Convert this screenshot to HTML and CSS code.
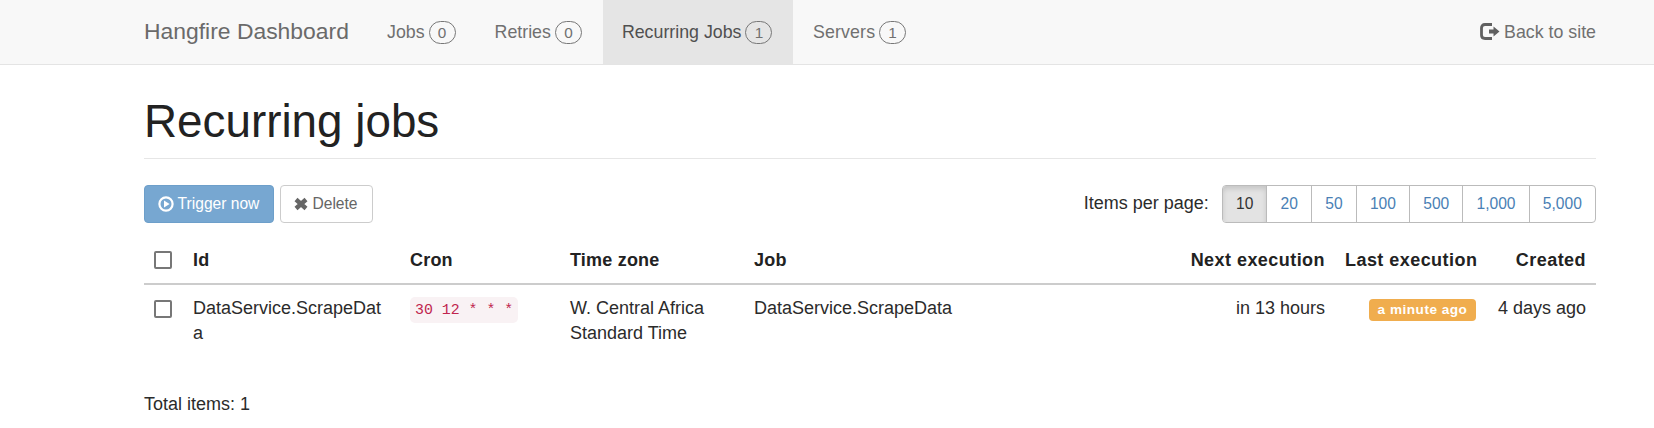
FILE: index.html
```
<!DOCTYPE html>
<html lang="en">
<head>
    <meta charset="UTF-8">
    <meta name="viewport" content="width=device-width, initial-scale=1.0">
    <title>Recurring jobs - Hangfire Dashboard</title>
    <link rel="stylesheet" href="styles.css">
</head>
<body>

    <div class="navbar">
        <div class="container">
            <a class="navbar-brand">Hangfire Dashboard</a>
            <ul class="nav">
                <li>Jobs <span class="metric">0</span></li>
                <li>Retries <span class="metric">0</span></li>
                <li class="active">Recurring Jobs <span class="metric">1</span></li>
                <li>Servers <span class="metric">1</span></li>
            </ul>
            <a class="back">
                <svg class="icon-logout" viewBox="0 0 20 17">
                    <path d="M12 1.5H5Q1.5 1.5 1.5 5V12Q1.5 15.5 5 15.5H12" fill="none" stroke="currentColor" stroke-width="2.8"/>
                    <path d="M9 6.5H13.5V3.5L19.5 8.5L13.5 13.5V10.5H9Z" fill="currentColor"/>
                </svg>
                <span>Back to site</span>
            </a>
        </div>
    </div>

    <div class="container content">
        <h1 class="page-header">Recurring jobs</h1>

        <div class="btn-toolbar">
            <button class="btn btn-primary">
                <svg class="icon" viewBox="0 0 16 16">
                    <circle cx="8" cy="8" r="6.6" fill="none" stroke="currentColor" stroke-width="2.2"/>
                    <path d="M6 4.5L11.6 8L6 11.5Z" fill="currentColor"/>
                </svg>
                <span>Trigger now</span>
            </button>
            <button class="btn btn-default">
                <svg class="icon icon-remove" viewBox="0 0 14 14">
                    <path d="M2 2.5L12 11.5M12 2.5L2 11.5" stroke="currentColor" stroke-width="4.4"/>
                </svg>
                <span>Delete</span>
            </button>
            <span class="per-page-label">Items per page:</span>
            <div class="btn-group">
                <a class="active">10</a>
                <a>20</a>
                <a>50</a>
                <a>100</a>
                <a>500</a>
                <a>1,000</a>
                <a>5,000</a>
            </div>
        </div>

        <table class="table">
            <colgroup>
                <col class="col-check">
                <col class="col-id">
                <col class="col-cron">
                <col class="col-zone">
                <col class="col-job">
                <col class="col-next">
                <col class="col-last">
                <col class="col-created">
            </colgroup>
            <thead>
                <tr>
                    <th><input type="checkbox"></th>
                    <th>Id</th>
                    <th>Cron</th>
                    <th>Time zone</th>
                    <th>Job</th>
                    <th class="right wide">Next execution</th>
                    <th class="right wide">Last execution</th>
                    <th class="right wide">Created</th>
                </tr>
            </thead>
            <tbody>
                <tr>
                    <td><input type="checkbox"></td>
                    <td class="word-break">DataService.ScrapeData</td>
                    <td><code>30 12 * * *</code></td>
                    <td>W. Central Africa Standard Time</td>
                    <td>DataService.ScrapeData</td>
                    <td class="right">in 13 hours</td>
                    <td class="right"><span class="label">a minute ago</span></td>
                    <td class="right">4 days ago</td>
                </tr>
            </tbody>
        </table>

        <div class="total">Total items: 1</div>
    </div>

</body>
</html>
```
FILE: styles.css
```
* { box-sizing: border-box; }
body {
    margin: 0;
    background-color: #fff;
    color: #2b2b2b;
    font-family: "Liberation Sans", Arial, sans-serif;
    font-size: 18px;
    line-height: 25.5px;
    overflow: hidden;
}
.container { width: 1452px; margin-left: 144px; }

/* Top navigation */
.navbar { height: 65px; background-color: #f8f8f8; border-bottom: 1px solid #e4e4e4; color: #707070; font-size: 17.8px; }
.navbar .container { display: flex; height: 64px; }
.navbar-brand { width: 224px; font-size: 22.9px; line-height: 63px; color: #6a6a6a; white-space: nowrap; }
.nav { display: flex; margin: 0; padding: 0; list-style: none; line-height: 27px; }
.nav li { display: flex; align-items: center; gap: 4px; padding: 1px 20px 0 19px; white-space: nowrap; }
.nav li:nth-child(2) { padding-right: 21px; }
.nav li.active { width: 190px; background-color: #e5e5e5; color: #505050; }
.nav li:last-child { padding-left: 20px; letter-spacing: 0.15px; }
.metric {
    width: 27px;
    height: 23px;
    border: 1.5px solid #777;
    border-radius: 12px;
    color: #707070;
    font-size: 15.3px;
    line-height: 21px;
    text-align: center;
}
.back { display: flex; align-items: center; gap: 4px; margin-left: auto; padding-top: 1px; }
.icon-logout { width: 20px; height: 17px; margin-top: -2px; color: #606060; }

/* Page title */
.page-header {
    margin: 0 0 26px;
    padding: 32px 0 11px;
    border-bottom: 1px solid #e6e6e6;
    color: #222;
    font-size: 45.8px;
    font-weight: normal;
    line-height: 50px;
}

/* Buttons above the table */
.btn-toolbar { display: flex; align-items: center; height: 38px; margin-bottom: 14px; }
.btn {
    display: flex;
    align-items: center;
    justify-content: center;
    gap: 4px;
    height: 38px;
    margin: 0 6px 0 0;
    padding: 0 1px 1px 0;
    border: 1px solid #ccc;
    border-radius: 4px;
    background-color: #fff;
    color: #666;
    font-family: inherit;
    font-size: 15.6px;
    white-space: nowrap;
}
.btn-primary { width: 130px; border-color: #6d9fca; background-color: #77a7d1; color: #fff; }
.btn-default { width: 93px; }
.icon { width: 16px; height: 16px; }
.icon-remove { width: 14px; height: 14px; }
.per-page-label { margin-left: auto; margin-right: 13px; }
.btn-group { display: flex; height: 38px; border: 1px solid #bbb; border-radius: 4px; color: #4a7fb5; font-size: 15.6px; line-height: 36px; }
.btn-group a { padding: 0 13.15px; border-left: 1px solid #bbb; }
.btn-group a:first-child { border-left: none; }
.btn-group .active {
    border-radius: 3px 0 0 3px;
    background-color: #e3e3e3;
    box-shadow: inset 0 3px 5px rgba(0, 0, 0, 0.13);
    color: #333;
}

/* Recurring jobs table */
.table { width: 1452px; margin-bottom: 35px; border-collapse: separate; border-spacing: 0; table-layout: fixed; }
.table th, .table td { padding: 10px; text-align: left; vertical-align: top; }
.table th { padding: 11px 10px 9px; border-bottom: 2px solid #ccc; color: #222; letter-spacing: 0.2px; }
.table td { padding-top: 11px; }
.table .right { text-align: right; white-space: nowrap; }
.table .wide { letter-spacing: 0.45px; }
.table .word-break { padding-right: 14px; word-break: break-all; }
.col-check { width: 39px; }
.col-id { width: 217px; }
.col-cron { width: 160px; }
.col-zone { width: 184px; }
.col-job { width: 426px; }
.col-next { width: 165px; }
.col-last { width: 151px; }
.col-created { width: 110px; }
input[type="checkbox"] {
    display: block;
    appearance: none;
    width: 18px;
    height: 18px;
    margin: 3px 0 0;
    border: 2px solid #777;
    border-radius: 2px;
    background-color: #fff;
}
td input[type="checkbox"] { margin-top: 4px; }
code {
    padding: 5px;
    border-radius: 5px;
    background-color: #f9f2f4;
    color: #c0254e;
    font-family: "Liberation Mono", monospace;
    font-size: 14.9px;
}
.label {
    display: inline-block;
    width: 107px;
    height: 22px;
    margin-top: 3px;
    border-radius: 4px;
    background-color: #f0ad4e;
    color: #fff;
    font-size: 13.6px;
    font-weight: bold;
    letter-spacing: 0.5px;
    line-height: 21px;
    text-align: center;
    vertical-align: top;
}
```
